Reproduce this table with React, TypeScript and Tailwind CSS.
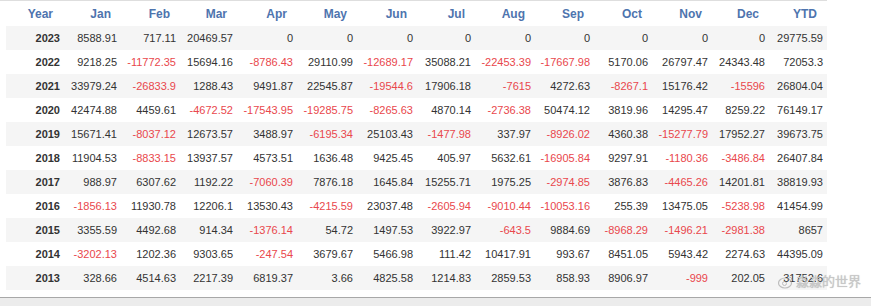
const months = ['Jan', 'Feb', 'Mar', 'Apr', 'May', 'Jun', 'Jul', 'Aug', 'Sep', 'Oct', 'Nov', 'Dec', 'YTD']

const colWidths = ['w-[58px]', 'w-[57px]', 'w-[59px]', 'w-[57px]', 'w-[60px]', 'w-[60px]', 'w-[60px]', 'w-[58px]', 'w-[60px]', 'w-[59px]', 'w-[58px]', 'w-[60px]', 'w-[57px]', 'w-[58px]']

const rows: [string, string[]][] = [
  ['2023', ['8588.91', '717.11', '20469.57', '0', '0', '0', '0', '0', '0', '0', '0', '0', '29775.59']],
  ['2022', ['9218.25', '-11772.35', '15694.16', '-8786.43', '29110.99', '-12689.17', '35088.21', '-22453.39', '-17667.98', '5170.06', '26797.47', '24343.48', '72053.3']],
  ['2021', ['33979.24', '-26833.9', '1288.43', '9491.87', '22545.87', '-19544.6', '17906.18', '-7615', '4272.63', '-8267.1', '15176.42', '-15596', '26804.04']],
  ['2020', ['42474.88', '4459.61', '-4672.52', '-17543.95', '-19285.75', '-8265.63', '4870.14', '-2736.38', '50474.12', '3819.96', '14295.47', '8259.22', '76149.17']],
  ['2019', ['15671.41', '-8037.12', '12673.57', '3488.97', '-6195.34', '25103.43', '-1477.98', '337.97', '-8926.02', '4360.38', '-15277.79', '17952.27', '39673.75']],
  ['2018', ['11904.53', '-8833.15', '13937.57', '4573.51', '1636.48', '9425.45', '405.97', '5632.61', '-16905.84', '9297.91', '-1180.36', '-3486.84', '26407.84']],
  ['2017', ['988.97', '6307.62', '1192.22', '-7060.39', '7876.18', '1645.84', '15255.71', '1975.25', '-2974.85', '3876.83', '-4465.26', '14201.81', '38819.93']],
  ['2016', ['-1856.13', '11930.78', '12206.1', '13530.43', '-4215.59', '23037.48', '-2605.94', '-9010.44', '-10053.16', '255.39', '13475.05', '-5238.98', '41454.99']],
  ['2015', ['3355.59', '4492.68', '914.34', '-1376.14', '54.72', '1497.53', '3922.97', '-643.5', '9884.69', '-8968.29', '-1496.21', '-2981.38', '8657']],
  ['2014', ['-3202.13', '1202.36', '9303.65', '-247.54', '3679.67', '5466.98', '111.42', '10417.91', '993.67', '8451.05', '5943.42', '2274.63', '44395.09']],
  ['2013', ['328.66', '4514.63', '2217.39', '6819.37', '3.66', '4825.58', '1214.83', '2859.53', '858.93', '8906.97', '-999', '202.05', '31752.6']],
]

const App = () => {
  return (
    <div className="relative h-[306px] w-[871px] overflow-hidden bg-[#ececec] font-['Liberation_Sans',Arial,sans-serif]">
      <div className="h-[298px] border-b border-[#a8a8a8] bg-white">
        <div className="h-px w-[827px] bg-[#dedede]" />
        <table className="ml-[6px] w-[821px] table-fixed border-collapse">
          <colgroup>
            {colWidths.map((w, i) => (
              <col key={i} className={w} />
            ))}
          </colgroup>
          <thead>
            <tr className="h-[25px]">
              <th className="pr-[11px] text-right text-[12px] font-bold text-[#4e74ae]">Year</th>
              {months.map((m) => (
                <th key={m} className="pr-[10px] text-right text-[12px] font-bold text-[#4e74ae]">
                  {m}
                </th>
              ))}
            </tr>
          </thead>
          <tbody>
            {rows.map(([year, vals], i) => (
              <tr key={year} className={`h-[24px] ${i % 2 === 0 ? 'bg-[#f5f5f5]' : 'bg-white'}`}>
                <td className="pr-[4px] text-right text-[11px] font-bold text-[#333]">{year}</td>
                {vals.map((v, j) => (
                  <td
                    key={j}
                    className={`pr-[4px] text-right text-[11px] ${v.startsWith('-') ? 'text-[#e9474c]' : 'text-[#333]'}`}
                  >
                    {v}
                  </td>
                ))}
              </tr>
            ))}
          </tbody>
        </table>
      </div>

      {/* weibo watermark */}
      <div className="absolute left-[778px] top-[272px] flex items-center gap-[2px] text-[13px] text-white/70 [text-shadow:0_0_1px_rgba(0,0,0,0.25)] font-['Liberation_Sans','Noto_Sans_CJK_SC',sans-serif]">
        <svg width="16" height="14" viewBox="0 0 16 14" className="opacity-60">
          <ellipse cx="7" cy="8" rx="6.5" ry="5" fill="none" stroke="#9a9a9a" strokeWidth="1.2" />
          <circle cx="6.5" cy="8.5" r="2" fill="none" stroke="#9a9a9a" strokeWidth="1" />
          <path d="M11 2 a3 3 0 0 1 3 3" fill="none" stroke="#9a9a9a" strokeWidth="1" />
        </svg>
        <span className="text-[#c8c8c8]">淼淼的世界</span>
      </div>
    </div>
  )
}

export default App
